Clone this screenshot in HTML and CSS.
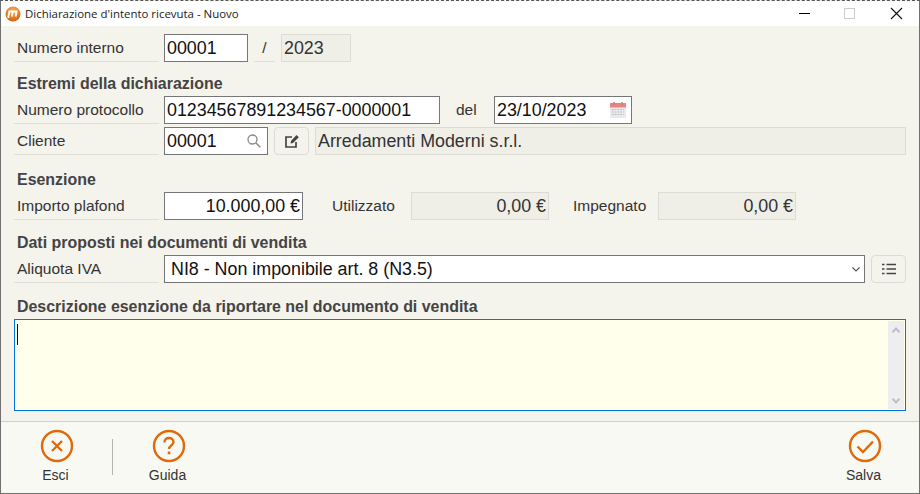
FILE: index.html
```html
<!DOCTYPE html>
<html lang="it">
<head>
<meta charset="utf-8">
<title>Dichiarazione d'intento ricevuta - Nuovo</title>
<link rel="stylesheet" href="styles.css">
</head>
<body>
<div class="window">
  <header class="titlebar">
    <svg class="logo" viewBox="0 0 16 16" width="16" height="16"><defs><radialGradient id="lg" cx="50%" cy="30%" r="70%"><stop offset="0" stop-color="#f9b35c"/><stop offset="1" stop-color="#d85f08"/></radialGradient></defs><circle cx="8" cy="8" r="7.5" fill="url(#lg)"/><path d="M3.200 12 4.400 5.500h3.400l-1 5M8 5.500h3.600l-1 5" fill="none" stroke="#fff" stroke-width="1.800"/></svg>
    <span class="title-text">Dichiarazione d'intento ricevuta - Nuovo</span>
    <div class="win-controls">
      <svg class="wc" viewBox="0 0 46 25" width="46" height="25"><path d="M18 12.500h11" stroke="#000" stroke-width="1"/></svg>
      <svg class="wc" viewBox="0 0 46 25" width="46" height="25"><rect x="17.500" y="7.500" width="10" height="10" fill="none" stroke="#ccc"/></svg>
      <svg class="wc" viewBox="0 0 46 25" width="46" height="25"><path d="M18 7l11 11M29 7 18 18" stroke="#111" stroke-width="1.100" fill="none"/></svg>
    </div>
  </header>

  <main class="content">
    <div class="row first">
      <label class="lbl">Numero interno</label>
      <div class="field w-84">00001</div>
      <span class="slash">/</span>
      <div class="field ro w-70">2023</div>
    </div>

    <h2 class="head h-34">Estremi della dichiarazione</h2>
    <div class="row">
      <label class="lbl">Numero protocollo</label>
      <div class="field w-276">01234567891234567-0000001</div>
      <span class="plain del">del</span>
      <div class="field w-138 has-icon">
        <span>23/10/2023</span>
        <svg viewBox="0 0 16 16" width="16" height="16"><rect x="0" y="1" width="16" height="15" fill="#e8e9ea"/><rect x="0" y="1" width="16" height="4.500" fill="#ec8380"/><path d="M4 0v3M12 0v3" stroke="#a88" stroke-width="1.400"/><path d="M2 7.500h12M2 10h12M2 12.500h12" stroke="#b8bcc0" stroke-width="1.200" stroke-dasharray="1.600 1.200"/></svg>
      </div>
    </div>
    <div class="row r-gap">
      <label class="lbl">Cliente</label>
      <div class="field w-104 has-icon search-field">
        <span>00001</span>
        <svg viewBox="0 0 14 14" width="14" height="14"><circle cx="5.500" cy="5.500" r="4.500" fill="none" stroke="#8a8a8a" stroke-width="1.300"/><path d="M9 9l4.300 4.300" stroke="#8a8a8a" stroke-width="1.500"/></svg>
      </div>
      <button class="btn" aria-label="Modifica"><svg viewBox="0 0 14 14" width="14" height="14"><path d="M7 3H1v10h10V8" fill="none" stroke="#444" stroke-width="1.700"/><path d="M5.500 9.500l.5-2.600L11.500 1 13.800 3.200 8 9z" fill="#444"/></svg></button>
      <div class="field ro grow">Arredamenti Moderni s.r.l.</div>
    </div>

    <h2 class="head h-37">Esenzione</h2>
    <div class="row">
      <label class="lbl">Importo plafond</label>
      <div class="field w-139 right">10.000,00 €</div>
      <span class="plain util">Utilizzato</span>
      <div class="field ro w-138 right">0,00 €</div>
      <span class="plain imp">Impegnato</span>
      <div class="field ro w-138 right">0,00 €</div>
    </div>

    <h2 class="head h-35">Dati proposti nei documenti di vendita</h2>
    <div class="row">
      <label class="lbl">Aliquota IVA</label>
      <div class="field grow select">
        <span>NI8 - Non imponibile art. 8 (N3.5)</span>
        <svg viewBox="0 0 8 5" width="8" height="5"><path d="M.5.500l3.500 3.500 3.500-3.500" fill="none" stroke="#555" stroke-width="1.100"/></svg>
      </div>
      <button class="btn" aria-label="Elenco"><svg viewBox="0 0 14 12" width="14" height="12"><path d="M4.500 1.500H14M4.500 6H14M4.500 10.500H14" stroke="#444" stroke-width="1.700"/><path d="M0 1.500h2.500M0 6h2.500M0 10.500h2.500" stroke="#444" stroke-width="1.700"/></svg></button>
    </div>

    <h2 class="head h-36">Descrizione esenzione da riportare nel documento di vendita</h2>
    <div class="memo">
      <span class="caret"></span>
      <div class="scrollbar">
        <div class="sb-btn"><svg viewBox="0 0 8 6" width="8" height="6"><path d="M.5 5.200 4 1.500l3.500 3.700" fill="none" stroke="#c0c0c0" stroke-width="2"/></svg></div>
        <div class="sb-btn"><svg viewBox="0 0 8 6" width="8" height="6"><path d="M.5.800 4 4.500 7.500.8" fill="none" stroke="#c0c0c0" stroke-width="2"/></svg></div>
      </div>
    </div>
  </main>

  <footer class="footer">
    <div class="action a-esci">
      <svg viewBox="0 0 34 34" width="34" height="34"><circle cx="17" cy="17" r="15" fill="none" stroke="#e06a0a" stroke-width="2.400"/><path d="M12 12l10 10M22 12 12 22" stroke="#e06a0a" stroke-width="2.400" fill="none"/></svg>
      <span>Esci</span>
    </div>
    <div class="sep"></div>
    <div class="action a-guida">
      <svg viewBox="0 0 34 34" width="34" height="34"><circle cx="17" cy="17" r="15" fill="none" stroke="#e06a0a" stroke-width="2.400"/><path d="M12.500 13.500c0-3 2-4.500 4.500-4.500s4.500 1.700 4.500 4c0 3.500-4.500 3.500-4.500 7" fill="none" stroke="#e06a0a" stroke-width="2.400"/><rect x="15.700" y="22.500" width="2.600" height="2.800" fill="#e06a0a"/></svg>
      <span>Guida</span>
    </div>
    <div class="action a-salva">
      <svg viewBox="0 0 34 34" width="34" height="34"><circle cx="17" cy="17" r="15" fill="none" stroke="#e06a0a" stroke-width="2.400"/><path d="M9.500 17.500l5.500 5.500L25 12.500" stroke="#e06a0a" stroke-width="2.400" fill="none"/></svg>
      <span>Salva</span>
    </div>
  </footer>
</div>
</body>
</html>
```

FILE: styles.css
```css
* { box-sizing: border-box; }
html, body { margin: 0; padding: 0; }
body { width: 920px; height: 494px; overflow: hidden; font-family: "Liberation Sans", Arial, sans-serif; color: #222; }
.window { width: 920px; height: 494px; display: flex; flex-direction: column; background: #f4f3ec; border-left: 1px solid #707070; border-right: 1px solid #707070; border-bottom: 1px solid #707070; border-top: 1px dashed #555; }
.titlebar { height: 25px; background: #fff; display: flex; align-items: center; padding-left: 4px; flex: none; }
.logo { flex: none; margin-right: 4px; }
.title-text { font-family: "Open Sans", sans-serif; font-size: 11.45px; color: #222; }
.win-controls { margin-left: auto; display: flex; }
.win-controls .wc { display: block; }
.content { flex: 1; padding: 8px 13px 0; }
.row { display: flex; height: 28px; align-items: stretch; gap: 6px; }
.r-gap { margin-top: 3px; }
.lbl { width: 145px; margin-right: -1px; border-bottom: 1px solid #dfded6; padding-left: 3px; font-size: 15.5px; line-height: 28px; color: #333; flex: none; }
.field { border: 1px solid #767676; background: #fff; font-size: 17.85px; line-height: 26px; padding: 0 2px; color: #111; white-space: nowrap; flex: none; }
.ro { background: #efeee7; border-color: #dcdbd4; color: #333; }
.grow { flex: 1; }
.w-84 { width: 84px; }
.w-70 { width: 70px; }
.w-276 { width: 276px; }
.w-138 { width: 138px; }
.w-139 { width: 139px; }
.w-104 { width: 104px; }
.right { text-align: right; }
.has-icon, .select { display: flex; align-items: center; justify-content: space-between; padding-right: 5px; }
.search-field { padding-right: 6px; }
.select { padding-left: 6px; padding-right: 4px; }
.slash { width: 21px; border-bottom: 1px solid #dfded6; text-align: center; font-size: 15.5px; line-height: 28px; color: #333; flex: none; }
.plain { font-size: 15.5px; line-height: 28px; color: #333; flex: none; }
.del { width: 42px; padding-left: 10px; }
.util { width: 96px; padding-left: 23px; }
.imp { width: 97px; padding-left: 18px; }
.btn { width: 35px; height: 28px; padding: 0; flex: none; display: flex; align-items: center; justify-content: center; background: #f4f3ec; border: 1px solid #dcdbd4; border-radius: 4px; }
.head { margin: 0; display: flex; align-items: flex-end; font-size: 15.95px; font-weight: bold; color: #444; padding-left: 3px; line-height: 18px; padding-bottom: 3px; }
.h-34 { height: 34px; }
.h-37 { height: 37px; }
.h-35 { height: 35px; }
.h-36 { height: 36px; }
.memo { height: 92px; background: #ffffec; border: 1px solid #0078d7; display: flex; justify-content: space-between; padding: 1px 1px 1px 2px; }
.caret { width: 1px; height: 21px; margin-top: 3px; background: #111; }
.scrollbar { width: 16px; background: #eeeef0; display: flex; flex-direction: column; justify-content: space-between; }
.sb-btn { height: 17px; display: flex; align-items: center; justify-content: center; }
.footer { flex: none; height: 72px; background: #f9f9f4; border-top: 1px solid #cfcec7; display: flex; padding-top: 7px; }
.action { display: flex; flex-direction: column; align-items: center; width: 60px; font-size: 14px; color: #333; line-height: 18px; gap: 3px; }
.action svg { display: block; }
.action span { margin-right: 3px; }
.a-esci { margin-left: 26px; }
.sep { width: 1px; height: 36px; background: #b5b5b0; margin: 10px 26px 0 25px; }
.a-salva { margin-left: auto; margin-right: 24px; }
```
